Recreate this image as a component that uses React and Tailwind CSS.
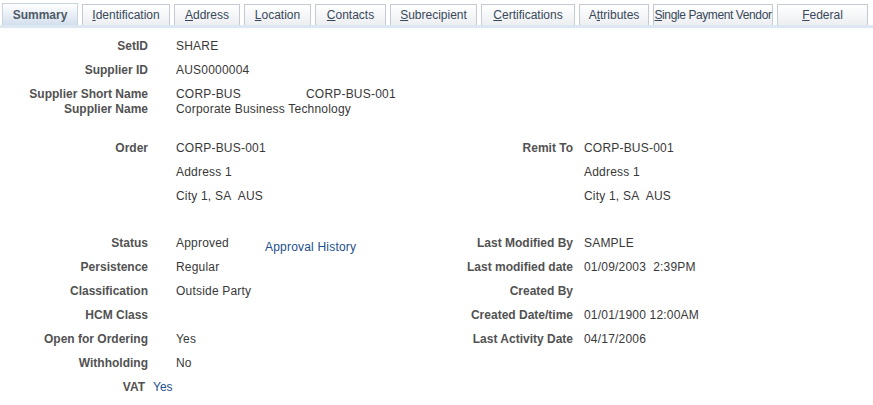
import React from 'react';

const tabs = [
  { label: 'Summary', key: null, w: 76 },
  { label: 'Identification', key: 'I', w: 88 },
  { label: 'Address', key: 'A', w: 66 },
  { label: 'Location', key: 'L', w: 67 },
  { label: 'Contacts', key: 'C', w: 71 },
  { label: 'Subrecipient', key: 'S', w: 87 },
  { label: 'Certifications', key: 'C', w: 94 },
  { label: 'Attributes', key: 't', w: 70 },
  { label: 'Single Payment Vendor', key: 'S', w: 120, tight: true },
  { label: 'Federal', key: 'F', w: 91 },
];

const Tab = ({ tab, active }) => {
  const idx = tab.key ? tab.label.indexOf(tab.key) : -1;
  return (
    <div
      style={{ width: tab.w }}
      className={
        (active
          ? 'h-[22px] font-bold text-[#4e5a66] border-[#c9d3de] bg-gradient-to-b from-white to-[#d3dfed]'
          : 'h-[21px] text-[#38485a] border-[#c3cad3] bg-gradient-to-b from-white to-[#eceef1]') +
        ' shrink-0 flex items-center justify-center border border-b-0 whitespace-nowrap' +
        (tab.tight ? ' tracking-[-0.4px]' : '')
      }
    >
      {idx < 0 ? (
        tab.label
      ) : (
        <span>
          {tab.label.slice(0, idx)}
          <span className="underline">{tab.label[idx]}</span>
          {tab.label.slice(idx + 1)}
        </span>
      )}
    </div>
  );
};

const Label = ({ children, w = 'w-[148px]' }) => (
  <div className={`${w} shrink-0 text-right font-bold text-[#525252]`}>{children}</div>
);

const Row = ({ label, children, h = 'h-[24px]' }) => (
  <div className={`${h} flex items-center`}>
    <Label>{label}</Label>
    <div className="ml-[28px] text-[#383838] whitespace-nowrap tracking-[0.2px]">{children}</div>
  </div>
);

const RRow = ({ label, children }) => (
  <div className="h-[24px] flex items-center">
    <Label w="w-[133px]">{label}</Label>
    <div className="ml-[11px] text-[#383838] whitespace-nowrap tracking-[0.2px]">{children}</div>
  </div>
);

export default function App() {
  return (
    <div className="w-[873px] h-[405px] bg-white text-[12px] overflow-hidden" style={{ fontFamily: '"Liberation Sans", Arial, sans-serif' }}>
      <div className="pt-[3px] pl-[2px] flex gap-[4px] items-end border-b-[3px] border-[#dde7f2]">
        {tabs.map((t, i) => (
          <Tab key={t.label} tab={t} active={i === 0} />
        ))}
      </div>

      <div className="pt-[6px]">
        <Row label="SetID">SHARE</Row>
        <Row label="Supplier ID">AUS0000004</Row>
        <Row label="Supplier Short Name" h="h-[16px] mt-[4px]">
          <span className="inline-block w-[130px]">CORP-BUS</span>CORP-BUS-001
        </Row>
        <Row label="Supplier Name" h="h-[14px]">Corporate Business Technology</Row>
      </div>

      <div className="mt-[20px] flex">
        <div className="w-[440px]">
          <Row label="Order">CORP-BUS-001</Row>
          <Row label="">Address 1</Row>
          <Row label="">City 1, SA&nbsp; AUS</Row>
        </div>
        <div>
          <RRow label="Remit To">CORP-BUS-001</RRow>
          <RRow label="">Address 1</RRow>
          <RRow label="">City 1, SA&nbsp; AUS</RRow>
        </div>
      </div>

      <div className="mt-[23px] flex">
        <div className="w-[440px]">
          <Row label="Status">
            <span className="inline-block w-[89px]">Approved</span>
            <span className="relative top-[4px] text-[#1c4f8c]">Approval History</span>
          </Row>
          <Row label="Persistence">Regular</Row>
          <Row label="Classification">Outside Party</Row>
          <Row label="HCM Class"></Row>
          <Row label="Open for Ordering">Yes</Row>
          <Row label="Withholding">No</Row>
          <div className="h-[24px] flex items-center">
            <Label w="w-[145px]">VAT</Label>
            <div className="ml-[8px] text-[#1c4f8c]">Yes</div>
          </div>
        </div>
        <div>
          <RRow label="Last Modified By">SAMPLE</RRow>
          <RRow label="Last modified date">01/09/2003&nbsp; 2:39PM</RRow>
          <RRow label="Created By"></RRow>
          <RRow label="Created Date/time">01/01/1900 12:00AM</RRow>
          <RRow label="Last Activity Date">04/17/2006</RRow>
        </div>
      </div>
    </div>
  );
}
